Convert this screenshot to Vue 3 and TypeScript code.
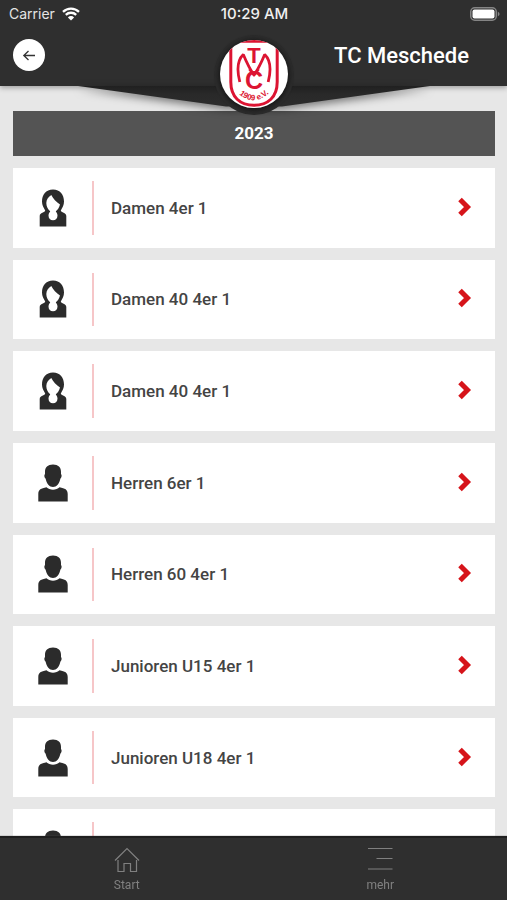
<script setup lang="ts">
interface Team {
  id: number
  name: string
  kind: 'female' | 'male'
}

const year = '2023'
const teams: Team[] = [
  { id: 1, name: 'Damen 4er 1', kind: 'female' },
  { id: 2, name: 'Damen 40 4er 1', kind: 'female' },
  { id: 3, name: 'Damen 40 4er 1', kind: 'female' },
  { id: 4, name: 'Herren 6er 1', kind: 'male' },
  { id: 5, name: 'Herren 60 4er 1', kind: 'male' },
  { id: 6, name: 'Junioren U15 4er 1', kind: 'male' },
  { id: 7, name: 'Junioren U18 4er 1', kind: 'male' },
  { id: 8, name: '', kind: 'male' },
]
</script>

<template>
  <div class="page">
    <header class="header">
      <div class="status">
        <div class="carrier">
          <span>Carrier</span>
          <svg class="wifi" viewBox="0 0 18 14" aria-hidden="true">
            <path d="M1 4.900a11.600 11.600 0 0 1 16 0" />
            <path d="M3.800 7.800a7.600 7.600 0 0 1 10.400 0" />
            <path class="solid" d="M9 13.600 5.900 10.400a4.400 4.400 0 0 1 6.200 0z" />
          </svg>
        </div>
        <time class="clock">10:29 AM</time>
        <svg class="battery" viewBox="0 0 30 14" aria-hidden="true">
          <rect class="case" x="0.75" y="0.75" width="25.5" height="12.5" rx="4" />
          <rect class="charge" x="2.5" y="2.5" width="22" height="9" rx="2" />
          <path class="tip" d="M27.800 4.600q3.600 2.400 0 4.800z" />
        </svg>
      </div>
      <div class="titlebar">
        <button class="back" type="button" aria-label="Zurück">
          <svg viewBox="0 0 32 32" aria-hidden="true">
            <path d="M22 16.500H11M15.500 12l-4.700 4.500 4.700 4.500" />
          </svg>
        </button>
        <h1 class="title">TC Meschede</h1>
      </div>
      <svg class="flap" viewBox="0 0 380 40" aria-hidden="true">
        <defs>
          <linearGradient id="flapFill" x1="0" y1="0" x2="0" y2="1">
            <stop offset="0" stop-color="#202020" />
            <stop offset="0.4" stop-color="#292929" />
            <stop offset="1" stop-color="#2c2c2c" />
          </linearGradient>
        </defs>
        <path d="M14 0H366L218 20.500H162z" fill="url(#flapFill)" />
      </svg>
      <div class="badge">
        <svg viewBox="0 0 68 68" role="img" aria-label="TC Meschede 1909 e.V.">
          <defs>
            <clipPath id="disc"><circle cx="34" cy="34" r="34" /></clipPath>
            <path id="arc" d="M14 49Q34 72 54 48" />
          </defs>
          <g clip-path="url(#disc)">
            <rect width="68" height="68" fill="#fff" />
            <path class="shield" d="M10.800 1.200H57.200V42C57.200 57 48 65.300 34 65.300S10.800 57 10.800 42z" />
            <path class="arches" d="M19.800 42C17 31 17.500 20 23.300 14.500C26 21 29 28 34 35C39 28 42 21 44.700 14.500C50.500 20 51 31 48.200 42" />
            <path class="heart" d="M28 29.500L34 31.500L40 29.500L34 37z" />
            <text class="mono-t" x="34" y="23" text-anchor="middle">T</text>
            <text class="mono-c" x="34" y="48.500" text-anchor="middle">C</text>
            <text class="founded"><textPath href="#arc" startOffset="50%" text-anchor="middle">1909 e.V.</textPath></text>
          </g>
        </svg>
      </div>
    </header>

    <main class="content">
      <h2 class="year">{{ year }}</h2>
      <ul class="teams">
        <li v-for="team in teams" :key="team.id">
          <a class="team" href="#">
            <span class="avatar">
              <svg v-if="team.kind === 'female'" viewBox="0 0 32 40" aria-hidden="true">
                <path
                  fill-rule="evenodd"
                  d="M16 1.500C8.800 1.500 5 6.500 5 13.500C5 17 6.500 19.500 8.200 22.500C8 24.500 2.700 24.500 2.700 28V38.500H29.300V28C29.300 24.500 24 24.500 23.800 22.500C25.500 19.500 27 17 27 13.500C27 6.500 23.200 1.500 16 1.500zM14.300 7C15.800 10.500 19.500 14 23 16.500C22.300 19.500 20.800 21.700 18.800 23.200C19 24.200 20.500 24.800 20.500 27.500C20.500 30.500 18.700 32.300 16 32.300S11.500 30.500 11.500 27.500C11.500 24.800 13 24.200 13.200 23.200C11 21.500 9.300 18.500 9.300 15C9.300 11.500 11.600 8.500 14.300 7z"
                />
              </svg>
              <svg v-else viewBox="0 0 32 40" aria-hidden="true">
                <path d="M16 1.500C10.700 1.500 8 4.300 8 9V11.200C7 11.200 7.300 14.800 8.600 15.500C9.500 20.500 12.500 24 16 24S22.500 20.500 23.400 15.500C24.700 14.800 25 11.200 24 11.200V9C24 4.300 21.300 1.500 16 1.500z" />
                <path d="M9.500 24.300C12.500 27.500 19.500 27.500 22.500 24.300C28 25.500 30.700 26.500 30.700 31V38.500H1.300V31C1.300 26.500 4 25.500 9.500 24.300z" />
              </svg>
            </span>
            <span class="name">{{ team.name }}</span>
            <svg class="chevron" viewBox="0 0 14 20" aria-hidden="true">
              <path d="M2 2.500 9.500 10 2 17.500" />
            </svg>
          </a>
        </li>
      </ul>
    </main>

    <nav class="tabs">
      <a class="tab" href="#">
        <svg viewBox="0 0 26 26" aria-hidden="true">
          <path d="M1 13.500 13 1.500 25 13.500M4 13V24.500H10V16.500H16.500V24.500H22.500V13" />
        </svg>
        <span>Start</span>
      </a>
      <a class="tab" href="#">
        <svg viewBox="0 0 26 26" aria-hidden="true">
          <path d="M1 1.500H25.500M9.500 11.500H25.500M1 22H25.500" />
        </svg>
        <span>mehr</span>
      </a>
    </nav>
  </div>
</template>

<style>
body {
  background: #e7e7e7;
}
</style>

<style scoped>
.page {
  display: flex;
  flex-direction: column;
  min-height: 100vh;
  font-family: Roboto, 'Liberation Sans', sans-serif;
  color: #444;
  background: #e7e7e7;
}

.header {
  position: sticky;
  top: 0;
  z-index: 2;
  height: 86px;
  background: #2f2f2f;
  color: #fff;
  box-shadow: 0 2px 5px rgba(0, 0, 0, 0.3);
}

.status {
  display: grid;
  grid-template-columns: 1fr auto 1fr;
  align-items: center;
  height: 28px;
  padding: 0 7px 0 9px;
  font-family: Inter, sans-serif;
  font-size: 14px;
  line-height: 20px;
}

.carrier {
  display: flex;
  align-items: center;
  gap: 7px;
  color: #e4e4e4;
}

.wifi {
  width: 18px;
  height: 14px;
  fill: none;
  stroke: #fff;
  stroke-width: 2.3;
}

.wifi .solid {
  fill: #fff;
  stroke: none;
}

.clock {
  font-size: 15px;
  font-weight: 500;
  color: #f0f0f0;
}

.battery {
  justify-self: end;
  width: 30px;
  height: 14px;
}

.battery .case {
  fill: none;
  stroke: #858585;
  stroke-width: 1.5;
}

.battery .charge {
  fill: #fff;
}

.battery .tip {
  fill: #858585;
}

.titlebar {
  display: flex;
  align-items: center;
  justify-content: space-between;
  height: 54px;
  padding: 0 38px 0 13px;
}

.back {
  width: 32px;
  height: 32px;
  padding: 0;
  border: 0;
  border-radius: 50%;
  background: #fff;
}

.back svg {
  display: block;
  fill: none;
  stroke: #333;
  stroke-width: 1.3;
}

.title {
  margin: 0;
  padding-top: 2px;
  font-size: 22px;
  line-height: 28px;
  font-weight: 500;
}

.flap {
  position: absolute;
  top: 86px;
  left: 50%;
  width: 380px;
  height: 40px;
  margin-left: -190px;
  filter: drop-shadow(0 3px 4px rgba(0, 0, 0, 0.5));
}

.badge {
  position: absolute;
  top: 40px;
  left: 50%;
  width: 68px;
  height: 68px;
  margin-left: -34px;
  border-radius: 50%;
  box-shadow: 0 1px 0 6px #2c2c2c;
}

.badge::before {
  content: '';
  position: absolute;
  inset: 0;
  border-radius: 50%;
  box-shadow: 0 1px 5px 1px #141414;
}

.badge svg {
  position: relative;
  display: block;
  width: 68px;
  height: 68px;
}

.shield {
  fill: none;
  stroke: #dc1432;
  stroke-width: 3;
}

.arches {
  fill: none;
  stroke: #dc1432;
  stroke-width: 2.8;
  stroke-linejoin: bevel;
}

.heart {
  fill: #dc1432;
}

.mono-t,
.mono-c,
.founded {
  fill: #dc1432;
  font-family: 'Liberation Sans', sans-serif;
  font-weight: 700;
}

.mono-t {
  font-size: 22px;
}

.mono-c {
  font-size: 25px;
}

.founded {
  font-size: 8px;
}

.content {
  flex: 1;
  display: flex;
  flex-direction: column;
  gap: 12px;
  padding: 25px 12px 11px 13px;
}

.year {
  margin: 0;
  background: #545454;
  color: #fff;
  font-size: 17px;
  line-height: 45px;
  font-weight: 700;
  text-align: center;
}

.teams {
  flex: 1;
  display: grid;
  grid-auto-rows: 1fr;
  gap: 12px;
  margin: 0;
  padding: 0;
  list-style: none;
}

.team {
  display: flex;
  align-items: center;
  box-sizing: border-box;
  height: 100%;
  min-height: 72px;
  padding: 13px 23px 13px 0;
  background: #fff;
  color: #444;
  text-decoration: none;
}

.avatar {
  display: flex;
  align-items: center;
  justify-content: center;
  align-self: stretch;
  box-sizing: border-box;
  width: 81px;
  border-right: 2px solid #f6c6c8;
}

.avatar svg {
  width: 32px;
  height: 40px;
  fill: #2b2b2b;
}

.name {
  flex: 1;
  padding-left: 17px;
  font-size: 17px;
  line-height: 24px;
  font-weight: 500;
}

.chevron {
  width: 14px;
  height: 20px;
  padding-bottom: 2px;
  fill: none;
  stroke: #d6141a;
  stroke-width: 5;
}

.tabs {
  position: fixed;
  right: 0;
  bottom: 0;
  left: 0;
  z-index: 2;
  display: grid;
  grid-template-columns: 1fr 1fr;
  box-sizing: border-box;
  height: 64px;
  border-top: 2px solid #1f1f1f;
  background: #2f2f2f;
  box-shadow: 0 0 1px #555;
}

.tab {
  display: flex;
  flex-direction: column;
  align-items: center;
  gap: 4px;
  padding-top: 9px;
  color: #808080;
  font-size: 12px;
  line-height: 16px;
  text-decoration: none;
}

.tab svg {
  width: 26px;
  height: 26px;
  fill: none;
  stroke: #808080;
  stroke-width: 1.2;
}
</style>
